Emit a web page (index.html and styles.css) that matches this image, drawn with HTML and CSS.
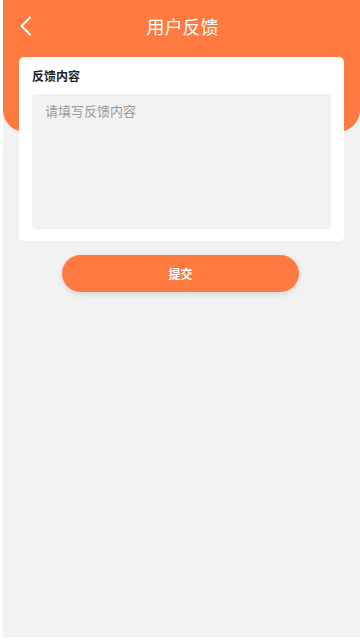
FILE: index.html
```html
<!DOCTYPE html>
<html lang="zh">
<head>
    <meta charset="UTF-8">
    <title>用户反馈</title>
    <link rel="stylesheet" href="styles.css">
</head>
<body>

<div class="page">
    <div class="header">
        <div class="nav">
            <span class="back">
                <svg width="14" height="20" viewBox="0 0 14 20"><path d="M11 1.5 L2.5 10 L11 18.5" fill="none" stroke="#fff" stroke-width="2" stroke-linecap="round" stroke-linejoin="round"/></svg>
            </span>
            <h1 class="title">用户反馈</h1>
        </div>
    </div>

    <!-- Feedback card -->
    <div class="card">
        <label class="label" for="content">反馈内容</label>
        <textarea id="content" class="textarea" placeholder="请填写反馈内容"></textarea>
    </div>

    <div class="actions">
        <button class="submit">提交</button>
    </div>
</div>

</body>
</html>
```

FILE: styles.css
```css
html, body {
    margin: 0;
    padding: 0;
    height: 100%;
}
body {
    font-family: "Noto Sans CJK SC", "Noto Sans", sans-serif;
    background: #fff;
}
.page {
    height: 637px;
    margin-left: 3px;
    background: #f2f2f2;
}
.header {
    height: 132px;
    background: #ff7a40;
    border-radius: 0 0 22px 22px;
}
.nav {
    position: relative;
    display: flex;
    align-items: center;
    justify-content: center;
    height: 52px;
}
.back {
    position: absolute;
    left: 16px;
    top: 16px;
    display: flex;
}
.title {
    margin: 0;
    color: #fff;
    font-size: 18px;
    font-weight: normal;
    line-height: 1;
    padding-left: 2px;
}
.card {
    margin: -75px 16px 0 16px;
    height: 184px;
    box-sizing: border-box;
    background: #fff;
    border-radius: 5px;
    padding: 12px 13px;
    display: flex;
    flex-direction: column;
}
.label {
    font-size: 12px;
    font-weight: bold;
    color: #222;
    line-height: 14px;
    margin-bottom: 11px;
}
.textarea {
    flex: 1;
    border: none;
    outline: none;
    resize: none;
    background: #f2f2f2;
    border-radius: 4px;
    padding: 7px 13px;
    font-family: inherit;
    font-size: 13px;
    color: #333;
}
.textarea::placeholder {
    color: #999;
}
.actions {
    display: flex;
    justify-content: center;
    padding: 14px 0 0 0;
}
.submit {
    width: 237px;
    height: 37px;
    margin-right: 2px;
    border: none;
    border-radius: 19px;
    background: #ff7a40;
    color: #fff;
    font-family: inherit;
    font-size: 12px;
    font-weight: bold;
    box-shadow: 0 2px 6px rgba(0, 0, 0, 0.12);
}
```
